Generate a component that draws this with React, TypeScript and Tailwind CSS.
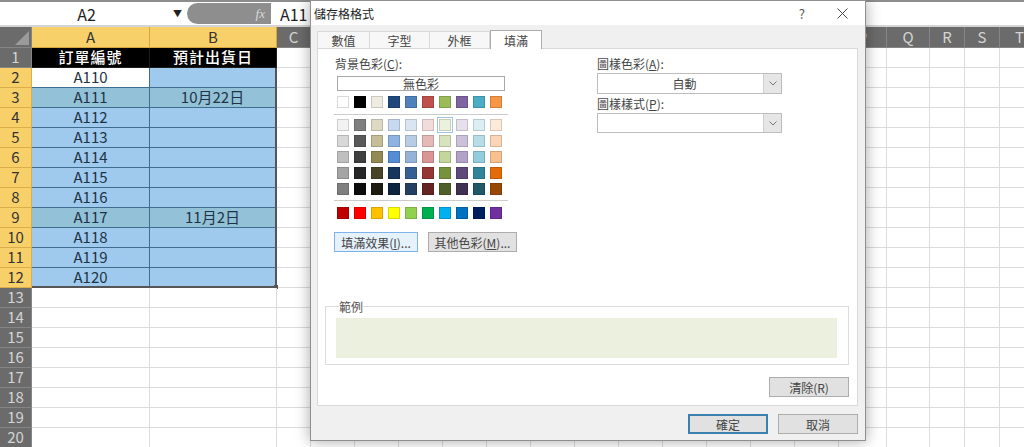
import React from "react";

type Col = { key: string; width: string; covered?: boolean };

// D..O sit under the dialog, so their letters are not drawn
const otherCols: Col[] = [
  { key: "C", width: "w-[34px]" },
  { key: "D", width: "w-[44px]", covered: true },
  { key: "E", width: "w-[44px]", covered: true },
  { key: "F", width: "w-[44px]", covered: true },
  { key: "G", width: "w-[44px]", covered: true },
  { key: "H", width: "w-[44px]", covered: true },
  { key: "I", width: "w-[44px]", covered: true },
  { key: "J", width: "w-[44px]", covered: true },
  { key: "K", width: "w-[44px]", covered: true },
  { key: "L", width: "w-[44px]", covered: true },
  { key: "M", width: "w-[44px]", covered: true },
  { key: "N", width: "w-[44px]", covered: true },
  { key: "O", width: "w-[44px]", covered: true },
  { key: "P", width: "w-[48px]" },
  { key: "Q", width: "w-[43px]" },
  { key: "R", width: "w-[35px]" },
  { key: "S", width: "w-[35px]" },
  { key: "T", width: "w-[40px]" },
];

const rows = Array.from({ length: 20 }, (_, i) => i + 1);

const shipDates: Record<number, string> = { 3: "10月22日", 9: "11月2日" };

const themeRow = [
  "bg-[#ffffff]", "bg-[#000000]", "bg-[#eeece1]", "bg-[#1f497d]", "bg-[#4f81bd]",
  "bg-[#c0504d]", "bg-[#9bbb59]", "bg-[#8064a2]", "bg-[#4bacc6]", "bg-[#f79646]",
];

const tintRows = [
  ["bg-[#f2f2f2]", "bg-[#7f7f7f]", "bg-[#ddd9c3]", "bg-[#c6d9f0]", "bg-[#dbe5f1]", "bg-[#f2dcdb]", "bg-[#ebf1dd]", "bg-[#e5e0ec]", "bg-[#dbeef3]", "bg-[#fdeada]"],
  ["bg-[#d8d8d8]", "bg-[#595959]", "bg-[#c4bd97]", "bg-[#8db3e2]", "bg-[#b8cce4]", "bg-[#e5b9b7]", "bg-[#d7e3bc]", "bg-[#ccc1d9]", "bg-[#b7dde8]", "bg-[#fbd5b5]"],
  ["bg-[#bfbfbf]", "bg-[#3f3f3f]", "bg-[#938953]", "bg-[#548dd4]", "bg-[#95b3d7]", "bg-[#d99694]", "bg-[#c3d69b]", "bg-[#b2a2c7]", "bg-[#92cddc]", "bg-[#fac08f]"],
  ["bg-[#a5a5a5]", "bg-[#262626]", "bg-[#494429]", "bg-[#17365d]", "bg-[#366092]", "bg-[#953734]", "bg-[#76923c]", "bg-[#5f497a]", "bg-[#31859b]", "bg-[#e36c09]"],
  ["bg-[#7f7f7f]", "bg-[#0c0c0c]", "bg-[#1d1b10]", "bg-[#0f243e]", "bg-[#244061]", "bg-[#632423]", "bg-[#4f6128]", "bg-[#3f3151]", "bg-[#205867]", "bg-[#974806]"],
];

const standardRow = [
  "bg-[#c00000]", "bg-[#ff0000]", "bg-[#ffc000]", "bg-[#ffff00]", "bg-[#92d050]",
  "bg-[#00b050]", "bg-[#00b0f0]", "bg-[#0070c0]", "bg-[#002060]", "bg-[#7030a0]",
];

function fillFor(row: number, isA: boolean) {
  if (row === 1) return "bg-black text-white";
  if (row === 2) return isA ? "bg-white" : "bg-[#9fcaee]";
  if (row === 3 || row === 9) return "bg-[#93c1d8]";
  if (row <= 12) return "bg-[#9fcaee]";
  return "bg-white";
}

function bordersFor(row: number, isA: boolean) {
  if (row === 1) return "border-r border-b border-[#1b1b1b]";
  if (row <= 11) {
    return isA
      ? "border-r border-b border-[#3f6d90]"
      : "border-r-2 border-b border-r-[#555555] border-b-[#3f6d90]";
  }
  if (row === 12) {
    return isA
      ? "border-r border-b-2 border-r-[#3f6d90] border-b-[#555555]"
      : "border-r-2 border-b-2 border-[#555555]";
  }
  return "border-r border-b border-[#dcdcdc]";
}

function FormulaBar() {
  return (
    <div className="flex h-[27px] shrink-0 items-center border-t-2 border-b-2 border-t-[#8d8d8d] border-b-[#d4d4d4] bg-white">
      <div className="relative flex h-full w-[187px] shrink-0 items-center justify-center text-[16px] text-[#222]">
        <span className="mr-[14px]">A2</span>
        <span className="absolute right-[5px] top-[5px] text-[9px] text-[#222]">▼</span>
      </div>
      <div className="flex h-[21px] w-[84px] shrink-0 items-center justify-end rounded-l-full bg-[#8e8e8e] pr-[6px]">
        <span className="font-['Liberation_Serif',serif] text-[13px] italic text-[#d9d9d9]">fx</span>
      </div>
      <div className="pl-[9px] text-[16px] text-[#222]">A11</div>
    </div>
  );
}

function HeaderRow() {
  return (
    <div className="flex h-[21px] shrink-0">
      <div className="flex w-[32px] shrink-0 items-end justify-end border-r border-b border-[#858585] bg-[#6b6b6b] pr-[2px] pb-[2px]">
        <svg width="14" height="14" viewBox="0 0 14 14">
          <polygon points="14,0 14,14 0,14" fill="#9a9a9a" />
        </svg>
      </div>
      <div className="flex w-[118px] shrink-0 items-center justify-center border-r border-b border-[#d8a63c] bg-[#f8d06a] text-[15px] text-[#333]">
        A
      </div>
      <div className="flex w-[127px] shrink-0 items-center justify-center border-r border-b border-[#d8a63c] bg-[#f8d06a] text-[15px] text-[#333]">
        B
      </div>
      {otherCols.map((col) => (
        <div
          key={col.key}
          className={`${col.width} flex shrink-0 items-center justify-center border-r border-b border-[#858585] bg-[#6b6b6b] text-[15px] text-[#d4d4d4]`}
        >
          {col.covered ? null : col.key}
        </div>
      ))}
    </div>
  );
}

function SheetRow({ row }: { row: number }) {
  const selected = row >= 2 && row <= 12;
  const orderNo = row === 1 ? "訂單編號" : row <= 12 ? `A${108 + row}` : "";
  const shipDate = row === 1 ? "預計出貨日" : shipDates[row] ?? "";

  return (
    <div className="flex h-[20px] shrink-0">
      <div
        className={`flex w-[32px] shrink-0 items-center justify-center border-r border-b text-[15px] ${
          selected
            ? "border-[#dcae4a] bg-[#f8d06a] text-[#333]"
            : "border-[#858585] bg-[#6b6b6b] text-[#d4d4d4]"
        }`}
      >
        {row}
      </div>
      <div
        className={`flex w-[118px] shrink-0 items-center justify-center text-[15px] text-[#1e3446] ${fillFor(row, true)} ${bordersFor(row, true)} ${
          row === 1 ? "font-medium tracking-[1px]" : ""
        }`}
      >
        {orderNo}
      </div>
      <div
        className={`relative flex w-[127px] shrink-0 items-center justify-center text-[15px] text-[#1e3446] ${fillFor(row, false)} ${bordersFor(row, false)} ${
          row === 1 ? "font-medium tracking-[1px]" : ""
        }`}
      >
        {shipDate}
        {row === 12 ? (
          <span className="absolute -right-[3px] -bottom-[3px] h-[4px] w-[4px] bg-[#555555]" />
        ) : null}
      </div>
      {otherCols.map((col) => (
        <div key={col.key} className={`${col.width} shrink-0 border-r border-b border-[#dcdcdc] bg-white`} />
      ))}
    </div>
  );
}

function Swatch({ color, active }: { color: string; active?: boolean }) {
  return (
    <div
      className={`h-[12px] w-[12px] shrink-0 border border-black/15 ${color} ${
        active ? "outline outline-1 outline-offset-[1px] outline-[#9cc6e8]" : ""
      }`}
    />
  );
}

function ChevronBox() {
  return (
    <div className="flex h-full w-[18px] shrink-0 items-center justify-center border-l border-[#d0d0d0] bg-[#e6e6e6]">
      <svg width="8" height="5" viewBox="0 0 8 5">
        <polyline points="0.5,0.5 4,4 7.5,0.5" fill="none" stroke="#777" strokeWidth="1" />
      </svg>
    </div>
  );
}

function DialogButton({ label, primary, width }: { label: string; primary?: boolean; width: string }) {
  return (
    <button
      className={`${width} flex h-[20px] items-center justify-center bg-[#e1e1e1] text-[12px] leading-[15px] text-[#444] ${
        primary ? "border-2 border-[#3c7fb1]" : "border border-[#adadad]"
      }`}
    >
      {label}
    </button>
  );
}

function FormatCellsDialog() {
  return (
    <div className="absolute top-0 left-[310px] flex h-[441px] w-[556px] flex-col border border-[#8f8f8f] bg-[#f0f0f0] font-['Noto_Sans_CJK_TC',sans-serif] text-[12px] text-[#444] shadow-[0_0_14px_rgba(0,0,0,0.35)]">
      {/* title bar */}
      <div className="flex h-[24px] shrink-0 items-center bg-white pl-[3px] text-[#222]">
        <span className="leading-[15px]">儲存格格式</span>
        <span className="ml-auto mr-[32px] text-[13px] leading-[15px] text-[#555]">?</span>
        <svg className="mr-[17px]" width="11" height="11" viewBox="0 0 11 11">
          <line x1="0.5" y1="0.5" x2="10.5" y2="10.5" stroke="#444" strokeWidth="1" />
          <line x1="10.5" y1="0.5" x2="0.5" y2="10.5" stroke="#444" strokeWidth="1" />
        </svg>
      </div>

      {/* tabs */}
      <div className="mt-[6px] flex h-[17px] shrink-0 pl-[6px] leading-[15px]">
        <div className="flex w-[53px] items-center justify-center border-t border-l border-r border-[#d9d9d9] bg-[#f7f7f7]">數值</div>
        <div className="flex w-[60px] items-center justify-center border-t border-r border-[#d9d9d9] bg-[#f7f7f7]">字型</div>
        <div className="flex w-[60px] items-center justify-center border-t border-r border-[#d9d9d9] bg-[#f7f7f7]">外框</div>
        <div className="relative z-10 -mt-[1px] -mb-[1px] flex w-[52px] items-center justify-center border border-b-0 border-[#acacac] bg-white">
          填滿
        </div>
      </div>

      {/* tab panel */}
      <div className="ml-[6px] flex h-[358px] w-[541px] shrink-0 flex-col border border-[#d9d9d9] bg-white">
        <div className="flex pl-[16px]">
          {/* background colour */}
          <div className="flex w-[190px] flex-col">
            <div className="mt-[7px] ml-[1px] h-[15px] leading-[15px]">背景色彩(<span className="underline">C</span>):</div>
            <div className="mt-[5px] ml-[3px] flex h-[15px] w-[168px] items-center justify-center border border-[#a9a9a9] leading-[13px]">
              無色彩
            </div>
            <div className="mt-[5px] ml-[3px] flex gap-[5px]">
              {themeRow.map((c, i) => (
                <Swatch key={i} color={c} />
              ))}
            </div>
            <div className="mt-[6px] h-px w-[174px] bg-[#cccccc]" />
            <div className="mt-[4px] ml-[3px] flex flex-col gap-[4px]">
              {tintRows.map((row, ri) => (
                <div key={ri} className="flex gap-[5px]">
                  {row.map((c, ci) => (
                    <Swatch key={ci} color={c} active={ri === 0 && ci === 6} />
                  ))}
                </div>
              ))}
            </div>
            <div className="mt-[5px] h-px w-[174px] bg-[#cccccc]" />
            <div className="mt-[6px] ml-[3px] flex gap-[5px]">
              {standardRow.map((c, i) => (
                <Swatch key={i} color={c} />
              ))}
            </div>
            <div className="mt-[13px] flex gap-[10px]">
              <button className="flex h-[20px] w-[84px] shrink-0 items-center justify-center border border-[#7eb4ea] bg-[#e5f1fb] text-[12px] leading-[15px] text-[#444]">
                填滿效果(<span className="underline">I</span>)...
              </button>
              <button className="flex h-[20px] w-[89px] shrink-0 items-center justify-center border border-[#adadad] bg-[#e1e1e1] text-[12px] leading-[15px] text-[#444]">
                其他色彩(<span className="underline">M</span>)...
              </button>
            </div>
          </div>

          {/* pattern */}
          <div className="ml-[73px] flex w-[185px] flex-col">
            <div className="mt-[7px] h-[15px] leading-[15px]">圖樣色彩(<span className="underline">A</span>):</div>
            <div className="mt-[2px] flex h-[21px] items-stretch border border-[#bdbdbd]">
              <div className="flex flex-1 items-center justify-center pl-[8px] leading-[15px]">自動</div>
              <ChevronBox />
            </div>
            <div className="mt-[2px] h-[15px] leading-[15px]">圖樣樣式(<span className="underline">P</span>):</div>
            <div className="mt-[2px] flex h-[20px] items-stretch border border-[#bdbdbd]">
              <div className="flex-1" />
              <ChevronBox />
            </div>
          </div>
        </div>

        {/* sample */}
        <fieldset className="mt-[47px] ml-[7px] w-[524px] border border-[#dcdcdc] px-[10px] pb-[6px]">
          <legend className="ml-[3px] h-[15px] leading-[15px] text-[#555]">範例</legend>
          <div className="mt-[4px] h-[40px] w-[501px] bg-[#ebf1de]" />
        </fieldset>

        <div className="mt-[12px] flex justify-end pr-[8px]">
          <DialogButton label="清除(R)" width="w-[80px]" />
        </div>
      </div>

      {/* footer */}
      <div className="mt-[8px] flex justify-end gap-[10px] pr-[7px]">
        <DialogButton label="確定" primary width="w-[80px]" />
        <DialogButton label="取消" width="w-[80px]" />
      </div>
    </div>
  );
}

export default function App() {
  return (
    <div className="relative h-[447px] w-[1024px] overflow-hidden bg-white font-['Noto_Sans_CJK_TC','Noto_Sans',sans-serif]">
      <div className="flex flex-col">
        <FormulaBar />
        <HeaderRow />
        {rows.map((row) => (
          <SheetRow key={row} row={row} />
        ))}
      </div>
      <FormatCellsDialog />
    </div>
  );
}
